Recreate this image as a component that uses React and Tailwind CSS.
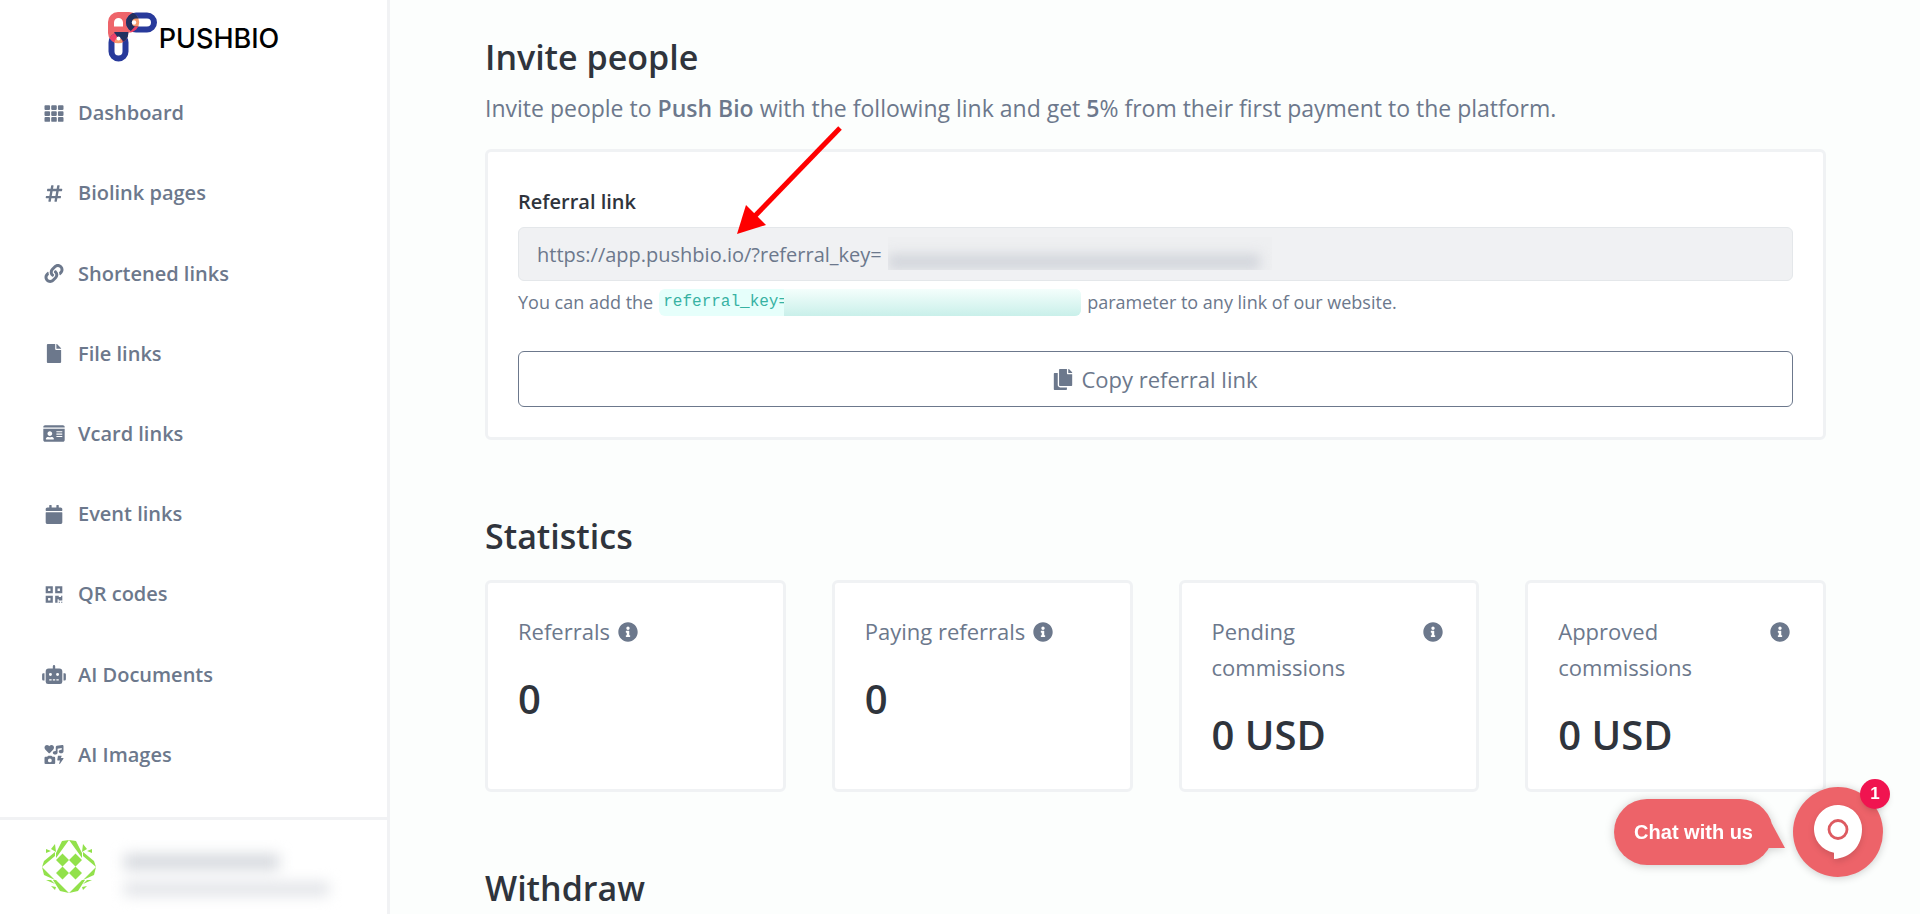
import React, { useState } from 'react';
import {
  FaTh,
  FaHashtag,
  FaLink,
  FaFile,
  FaIdCard,
  FaCalendar,
  FaQrcode,
  FaRobot,
  FaIcons,
  FaCopy,
  FaInfoCircle,
} from 'react-icons/fa';

const navItems = [
  { label: 'Dashboard', icon: FaTh },
  { label: 'Biolink pages', icon: FaHashtag },
  { label: 'Shortened links', icon: FaLink },
  { label: 'File links', icon: FaFile },
  { label: 'Vcard links', icon: FaIdCard },
  { label: 'Event links', icon: FaCalendar },
  { label: 'QR codes', icon: FaQrcode },
  { label: 'AI Documents', icon: FaRobot },
  { label: 'AI Images', icon: FaIcons },
];

const stats = [
  { label: 'Referrals', value: '0' },
  { label: 'Paying referrals', value: '0' },
  { label: 'Pending commissions', value: '0 USD', spread: true },
  { label: 'Approved commissions', value: '0 USD', spread: true },
];

const pinkShape = 'M10 0H21A10 10 0 0 1 21 20.5H20.5V21A10 10 0 0 1 0 21V10A10 10 0 0 1 10 0Z';

const Logo = () => (
  <a href="#" className="flex items-center gap-0.5 text-black">
    <svg width="49" height="50" viewBox="0 0 49 50" fill="none" aria-hidden="true">
      <clipPath id="pink">
        <path d={pinkShape} />
      </clipPath>
      <path d={pinkShape} fill="#ee646a" />
      <path d="M10.500 6A4.500 4.500 0 0 1 15 10.500V14.500H6V10.500A4.500 4.500 0 0 1 10.500 6Z" fill="#fff" />
      <rect x="3.500" y="23.500" width="14" height="23" rx="7" fill="#fff" stroke="#283a9b" strokeWidth="6" />
      <rect x="21" y="3.500" width="25" height="14" rx="7" fill="#fff" stroke="#283a9b" strokeWidth="6" />
      <g clipPath="url(#pink)">
        <rect x="3.500" y="23.500" width="14" height="23" rx="7" fill="#f7996c" stroke="#ee4068" strokeWidth="6" />
        <path d="M6 20H20.500V30H15A5 5 0 0 0 10 26Z" fill="#22305f" />
        <rect x="21" y="3.500" width="25" height="14" rx="7" fill="#f7996c" stroke="#22305f" strokeWidth="6" />
        <path d="M27 14.500H32V21H21Z" fill="#ee4068" />
        <circle cx="26" cy="10.500" r="2.200" fill="#fff" />
        <circle cx="10.500" cy="26.500" r="2" fill="#fff" />
      </g>
    </svg>
    <span className="pt-1 font-[Inter,sans-serif] text-[27px] leading-[30px] font-medium">PUSHBIO</span>
  </a>
);

// left half of the avatar's outline, mirrored for the right half
const edge =
  'M27 0L20 1L14 13V18ZM13 4L14 12L9 9ZM4 9L9 11L4 13ZM13 12L2 21L0 27L13 16ZM0 27L2 35L13 40ZM4 40H9L13 44ZM9 46L14 47L13 50ZM11 40H14L27 53L18 51Z';

const Avatar = () => (
  <svg width="54" height="54" viewBox="0 0 54 54" fill="#92e14b" aria-hidden="true">
    <path d={edge} />
    <path d={edge} transform="matrix(-1 0 0 1 54 0)" />
    <path d="M20.500 13.500l6.500 6.500-6.500 6.500-6.500-6.500zM33.500 13.500l6.500 6.500-6.500 6.500-6.500-6.500zM20.500 26.500l6.500 6.500-6.500 6.500-6.500-6.500zM33.500 26.500l6.500 6.500-6.500 6.500-6.500-6.500z" />
  </svg>
);

const Sidebar = () => (
  <aside className="sticky top-0 flex h-screen w-[390px] shrink-0 flex-col border-r-3 border-[#f1f2f4] bg-white">
    <div className="flex h-[73px] items-center justify-center">
      <Logo />
    </div>
    <nav className="grid flex-1 auto-rows-fr pb-[22px]">
      {navItems.map(({ label, icon: Icon }) => (
        <a key={label} href="#" className="flex items-center gap-3 px-[42px] text-[20px] font-semibold text-[#6c788c]">
          <Icon className="h-[19px] w-6" />
          {label}
        </a>
      ))}
    </nav>
    <div className="flex h-[97px] items-center gap-7 border-t-3 border-[#f1f2f4] px-[42px]">
      <Avatar />
      <div className="flex flex-col gap-3 pt-4 blur-[7px]" aria-hidden="true">
        <span className="block h-4 w-[155px] bg-[#d6d9de]" />
        <span className="block h-3.5 w-[205px] bg-[#e2e4e8]" />
      </div>
    </div>
  </aside>
);

const StatCard = ({ label, value, spread }) => (
  <div className="rounded-md border-3 border-[#f0f2f4] bg-white px-[30px] pt-[30px] pb-6">
    <div className={spread ? 'flex items-start justify-between' : 'flex items-start gap-2'}>
      <span className={spread ? 'w-[140px] text-[22px] leading-9' : 'text-[22px] leading-9'}>{label}</span>
      <FaInfoCircle className="mt-[9px] mr-[3px] size-5 shrink-0" />
    </div>
    <p className="mt-5 text-[40px] leading-[60px] font-semibold text-[#2f343c]">{value}</p>
  </div>
);

const ChatWidget = () => (
  <div className="fixed right-[37px] bottom-[37px] flex items-center gap-2 font-['Liberation_Sans',sans-serif]">
    <button className="flex drop-shadow-[0_1px_5px_rgba(0,0,0,0.2)]">
      <span className="rounded-full bg-[#ed6369] px-5 py-[18px] text-xl leading-[30px] font-bold text-white">
        Chat with us
      </span>
      <svg width="20" height="24" viewBox="0 0 20 24" className="mt-[25px] -ml-2" fill="#ed6369" aria-hidden="true">
        <path d="M7 0L20 24H0V0Z" />
      </svg>
    </button>
    <button aria-label="Open chat" className="relative size-[90px] rounded-full bg-[#ed6369] shadow-[0_1px_8px_rgba(0,0,0,0.2)]">
      <svg width="90" height="90" viewBox="0 0 90 90" className="drop-shadow-md" aria-hidden="true">
        <path fill="#fff" d="M41 72V65.700A24 24 0 1 1 69 42C69 59 58 71 41 72Z" />
        <circle cx="45" cy="42.500" r="9" fill="#fff" stroke="#dd5a60" strokeWidth="2.800" />
      </svg>
      <span className="absolute -top-2 -right-[7px] flex size-[30px] items-center justify-center rounded-full bg-[#f01450] text-[17px] font-bold text-white shadow-md">
        1
      </span>
    </button>
  </div>
);

const App = () => {
  const [link] = useState('https://app.pushbio.io/?referral_key=');

  return (
    <div className="flex min-h-screen bg-[#fcfefd] font-['Open_Sans',sans-serif] text-[#6c788c]">
      <Sidebar />
      <main className="h-screen flex-1 overflow-hidden pt-8 pr-[94px] pl-[95px]">
        <h1 className="text-[34px] leading-[50px] font-semibold text-[#2f343c]">Invite people</h1>
        <p className="mt-2 text-[23px] leading-9">
          Invite people to <b className="font-semibold">Push Bio</b> with the following link and get{' '}
          <b className="font-semibold">5</b>% from their first payment to the platform.
        </p>

        <section className="relative mt-[23px] rounded-md border-3 border-[#f0f2f4] bg-white p-[30px]">
          <label htmlFor="referral" className="block pt-0.5 text-[20px] leading-9 font-semibold text-[#2f343c]">
            Referral link
          </label>
          <div className="relative mt-[7px]">
            <input
              id="referral"
              readOnly
              value={link}
              className="block h-[54px] w-full rounded-md border border-[#e4e7ea] bg-[#f0f1f3] px-[18px] text-[20px]"
            />
            <span
              className="absolute top-2.5 left-[370px] flex h-[33px] w-[384px] items-end overflow-hidden bg-[#eeeff1]"
              aria-hidden="true"
            >
              <span className="h-4 w-[372px] bg-[#d3d6dc] blur-[6px]" />
            </span>
          </div>
          <p className="mt-1 flex items-center text-[18px] leading-[34px]">
            You can add the
            <code className="relative mx-1.5 flex h-[27px] w-[422px] items-center overflow-hidden rounded-md bg-[#e6fffb] px-1 font-['Liberation_Mono',monospace] text-[16px] text-[#38b2a3]">
              referral_key=
              <span className="absolute inset-y-0 right-0 w-[297px] bg-linear-to-b from-[#f4fefc] to-[#c9f0ea]" />
            </code>
            parameter to any link of our website.
          </p>
          <button className="mt-8 flex h-14 w-full items-center justify-center gap-2 rounded-md border border-[#6c788c] text-[22px]">
            <FaCopy className="h-[21px] w-5" />
            Copy referral link
          </button>
          <svg width="110" height="112" viewBox="0 0 110 112" className="absolute -top-[26px] left-[246px]" aria-hidden="true">
            <path d="M106 2L18 93" stroke="#fe0000" strokeWidth="5" />
            <path d="M3 108L12 79L32 99Z" fill="#fe0000" />
          </svg>
        </section>

        <h2 className="mt-[71px] text-[34px] leading-[50px] font-semibold text-[#2f343c]">Statistics</h2>
        <section className="mt-[19px] grid grid-cols-4 gap-[46px]">
          {stats.map((stat) => (
            <StatCard key={stat.label} {...stat} />
          ))}
        </section>

        <h2 className="mt-[71px] text-[34px] leading-[50px] font-semibold text-[#2f343c]">Withdraw</h2>
      </main>
      <ChatWidget />
    </div>
  );
};

export default App;
